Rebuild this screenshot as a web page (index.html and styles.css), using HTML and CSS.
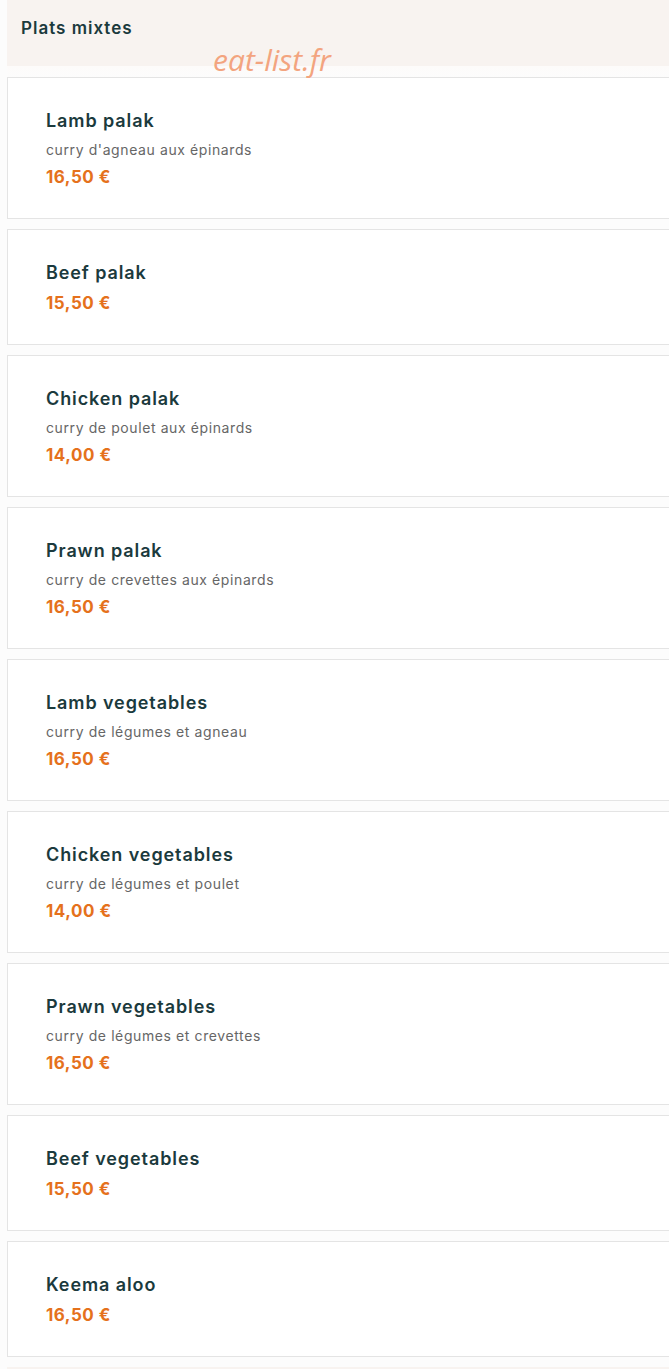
FILE: index.html
```html
<!DOCTYPE html>
<html lang="fr">
<head>
  <meta charset="UTF-8" />
  <meta name="viewport" content="width=device-width, initial-scale=1.0" />
  <title>Plats mixtes</title>
  <link rel="stylesheet" href="styles.css">
</head>
<body>
  <div class="menu">
    <h2 class="section-title">Plats mixtes</h2>
    <div class="watermark">eat-list.fr</div>

    <div class="items">
      <div class="item">
        <h3>Lamb palak</h3>
        <p class="desc">curry d'agneau aux épinards</p>
        <p class="price">16,50 €</p>
      </div>
      <div class="item">
        <h3>Beef palak</h3>
        <p class="price">15,50 €</p>
      </div>
      <div class="item">
        <h3>Chicken palak</h3>
        <p class="desc">curry de poulet aux épinards</p>
        <p class="price">14,00 €</p>
      </div>
      <div class="item">
        <h3>Prawn palak</h3>
        <p class="desc">curry de crevettes aux épinards</p>
        <p class="price">16,50 €</p>
      </div>
      <div class="item">
        <h3>Lamb vegetables</h3>
        <p class="desc">curry de légumes et agneau</p>
        <p class="price">16,50 €</p>
      </div>
      <div class="item">
        <h3>Chicken vegetables</h3>
        <p class="desc">curry de légumes et poulet</p>
        <p class="price">14,00 €</p>
      </div>
      <div class="item">
        <h3>Prawn vegetables</h3>
        <p class="desc">curry de légumes et crevettes</p>
        <p class="price">16,50 €</p>
      </div>
      <div class="item">
        <h3>Beef vegetables</h3>
        <p class="price">15,50 €</p>
      </div>
      <div class="item">
        <h3>Keema aloo</h3>
        <p class="price">16,50 €</p>
      </div>
    </div>
    <div class="next-section"></div>
  </div>
</body>
</html>
```

FILE: styles.css
```css
body {
  margin: 0;
  background: #fcfcfc;
  font-family: Inter, "Noto Sans", sans-serif;
  overflow-x: hidden;
}
.menu {
  position: relative;
  margin-left: 7px;
  width: 680px;
}
.section-title {
  margin: 0;
  height: 66px;
  padding: 17px 14px 0;
  box-sizing: border-box;
  background: #f8f3f0;
  color: #1b3a3d;
  font-size: 17px;
  font-weight: 600;
  line-height: 22px;
  letter-spacing: 1px;
}
.watermark {
  position: absolute;
  left: 206px;
  top: 40px;
  font-family: "Open Sans", sans-serif;
  font-style: italic;
  font-size: 30px;
  line-height: 40px;
  color: #f3a47f;
}
.items {
  padding-top: 11px;
  background: linear-gradient(#fdfbfa, #fcfcfc 12px);
  display: flex;
  flex-direction: column;
  gap: 10px;
}
.item {
  background: #fff;
  border: 1px solid #e4e4e4;
  padding: 30px 38px 28px;
}
.item h3 {
  margin: 0;
  color: #1b3a3d;
  font-size: 18px;
  font-weight: 600;
  line-height: 26px;
  letter-spacing: 0.9px;
}
.desc {
  margin: 6px 0 0;
  color: #666;
  font-size: 14px;
  line-height: 20px;
  letter-spacing: 0.6px;
}
.price {
  margin: 4px 0 0;
  color: #e5711c;
  font-size: 17px;
  font-weight: 700;
  line-height: 26px;
  letter-spacing: 0.5px;
}
.next-section {
  margin-top: 10px;
  height: 20px;
  background: #f8f3f0;
}
```
